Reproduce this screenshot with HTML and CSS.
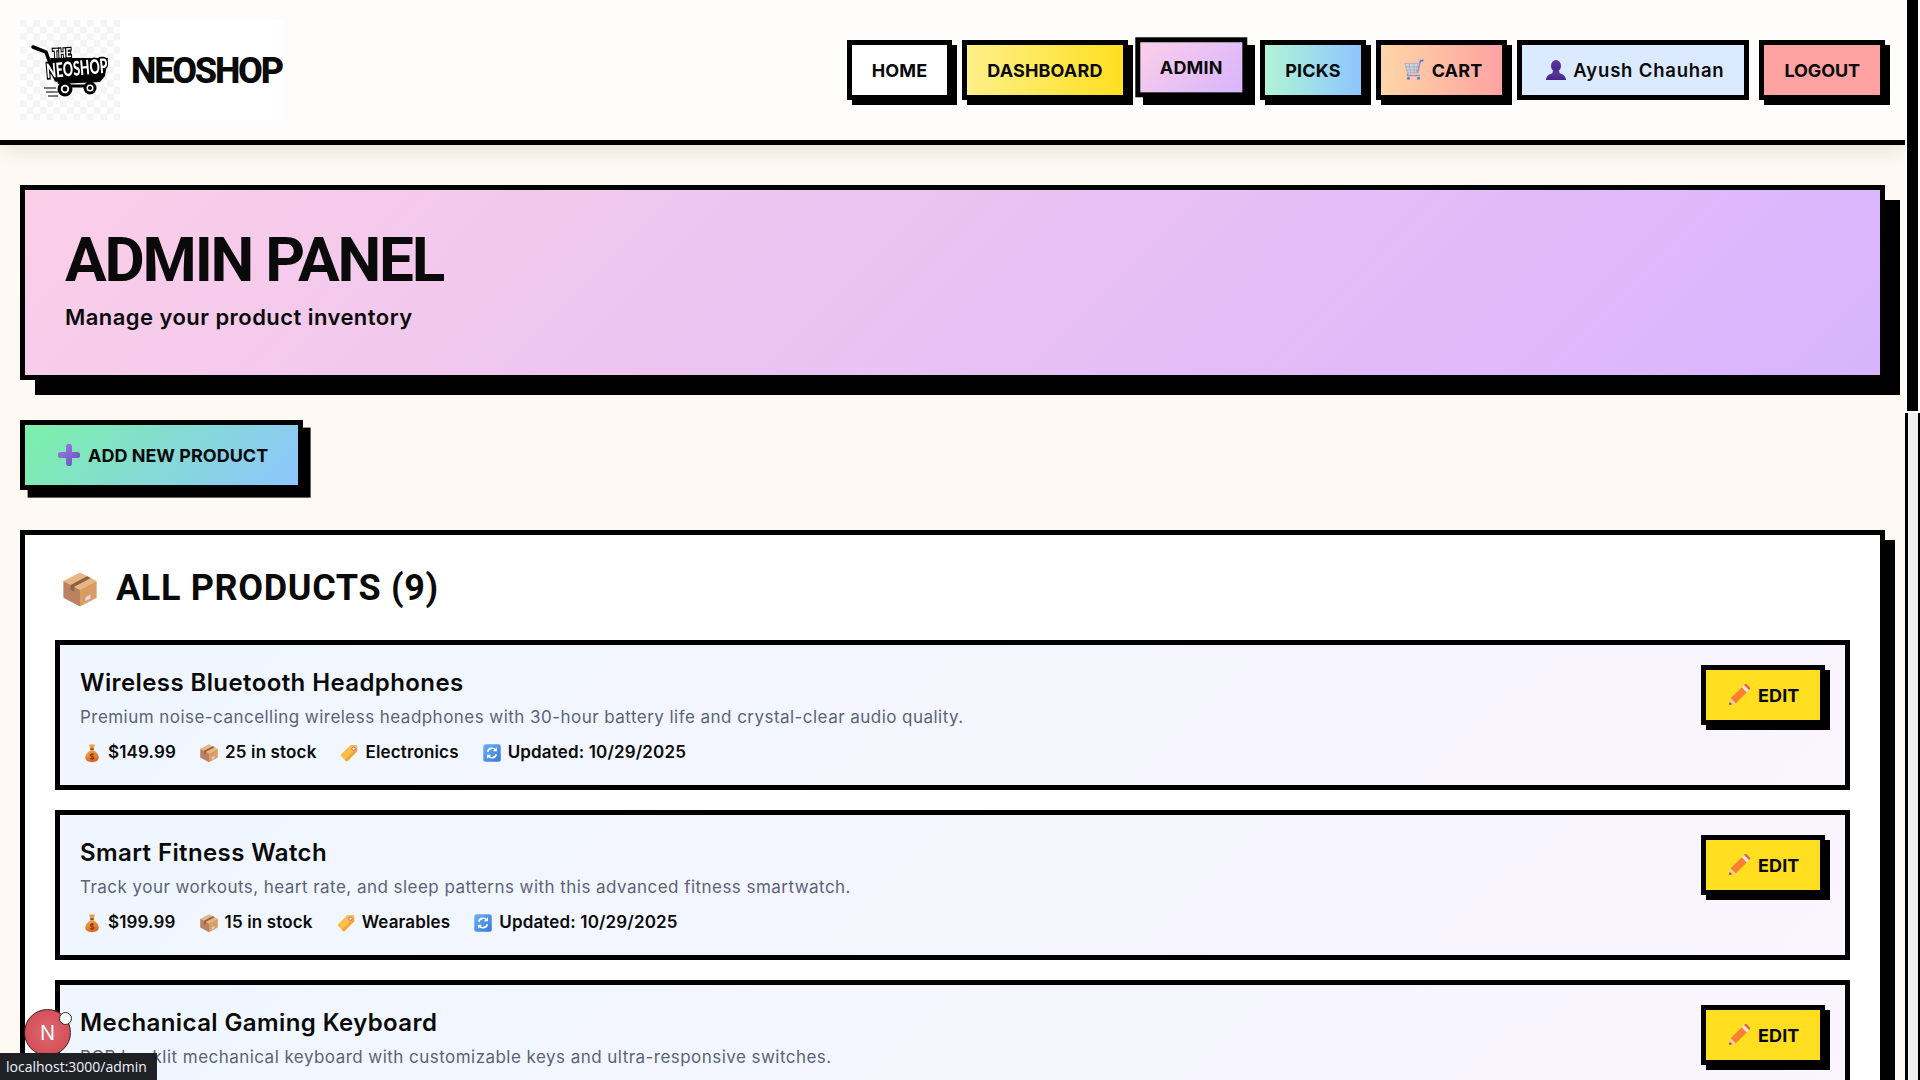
FILE: index.html
```html
<!DOCTYPE html>
<html lang="en">
<head>
<meta charset="utf-8">
<title>NeoShop Admin</title>
<link rel="stylesheet" href="styles.css">
</head>
<body>
<svg class="sprite" aria-hidden="true">
  <defs>
    <linearGradient id="g-bag" x1="0" y1="0" x2="0.3" y2="1"><stop offset="0" stop-color="#f7b046"/><stop offset="1" stop-color="#dd6427"/></linearGradient>
    <linearGradient id="g-blue" x1="0" y1="0" x2="1" y2="1"><stop offset="0" stop-color="#6cb2f5"/><stop offset="1" stop-color="#3577d8"/></linearGradient>
    <linearGradient id="g-plus" x1="0" y1="0" x2="1" y2="1"><stop offset="0" stop-color="#9a74d8"/><stop offset="1" stop-color="#6a58c8"/></linearGradient>
    <linearGradient id="g-purple" x1="0" y1="0" x2="0" y2="1"><stop offset="0" stop-color="#5a3a98"/><stop offset="1" stop-color="#46268a"/></linearGradient>
    <symbol id="i-box" viewBox="0 0 24 24">
      <polygon points="12,1.5 22.5,7 12,12.5 1.5,7" fill="#e6b781"/>
      <polygon points="1.5,7 12,12.5 12,23 1.5,17.5" fill="#bb8262"/>
      <polygon points="22.5,7 12,12.5 12,23 22.5,17.5" fill="#d99c62"/>
      <polygon points="16.6,3.9 18.8,5 8.4,10.6 8.4,13.6 6,12.4 6,9.4" fill="#8d5f4c"/>
      <polygon points="15.4,17.2 18.6,15.5 18.6,18 15.4,19.7" fill="#e2d6ea"/>
    </symbol>
    <symbol id="i-bag" viewBox="0 0 24 24">
      <path d="M12 8C7.5 9 4 14 4 17.5 4 21.5 7.5 23 12 23s8-1.500 8-5.500C20 14 16.500 9 12 8Z" fill="url(#g-bag)"/>
      <path d="M8.500 1.500c1.200.8 2.300.8 3.500 0 1.200.8 2.300.8 3.500 0L14 7h-4Z" fill="#ee9c3c"/>
      <rect x="9.500" y="6.300" width="5" height="2" rx="1" fill="#8c4a2c"/>
      <path d="M14.300 13.800c-.8-1-4.300-1.100-4.300.8 0 2.100 4.200 1 4.200 3.100 0 1.800-3.500 1.800-4.500.7M12 12v8.500" fill="none" stroke="#7c3d26" stroke-width="1.300"/>
    </symbol>
    <symbol id="i-tag" viewBox="0 0 24 24">
      <path d="M14 2.500h7a.8.800 0 0 1 .8.800V10L10.400 21.500a1.500 1.500 0 0 1-2.100 0L2.500 15.700a1.500 1.500 0 0 1 0-2.100Z" fill="#fbbf47"/>
      <path d="M21.800 10 10.400 21.500a1.500 1.500 0 0 1-2.100 0L7 20.200 21.800 5.500Z" fill="#f4a637"/>
      <circle cx="17.500" cy="6.800" r="2.100" fill="#f4ecea" stroke="#d9597a" stroke-width="1.100"/>
    </symbol>
    <symbol id="i-sync" viewBox="0 0 24 24">
      <rect x="1.500" y="1.500" width="21" height="21" rx="3" fill="url(#g-blue)"/>
      <path d="M6.800 10.500A5.500 5.500 0 0 1 16.500 8.500M17.200 13.500A5.500 5.500 0 0 1 7.500 15.500" fill="none" stroke="#fff" stroke-width="2"/>
      <path d="M18 5v5h-5ZM6 19v-5h5Z" fill="#fff"/>
    </symbol>
    <symbol id="i-pencil" viewBox="0 0 24 24">
      <polygon points="1,23 3,15.500 8.500,21" fill="#f3c9a0"/>
      <polygon points="1,23 1.900,19.500 4.500,22" fill="#6a4a5a"/>
      <polygon points="3,15.500 15,3.500 20.500,9 8.500,21" fill="#f98030"/>
      <polygon points="15,3.500 17.500,1 23,6.500 20.500,9" fill="#e8e4ee"/>
      <polygon points="17.500,1 19.500,-.500 24.500,4.500 23,6.500" fill="#f25a45"/>
    </symbol>
    <symbol id="i-plus" viewBox="0 0 24 24">
      <path d="M12 3v18M3 12h18" stroke="url(#g-plus)" stroke-width="6.500" stroke-linecap="round" fill="none"/>
    </symbol>
    <symbol id="i-user" viewBox="0 0 24 24">
      <ellipse cx="12" cy="7.500" rx="5.500" ry="6.500" fill="url(#g-purple)"/>
      <path d="M8.500 13h7l.5 2.500c4 1 6.500 3 7 7.500H1c.5-4.500 3-6.500 7-7.500Z" fill="url(#g-purple)"/>
    </symbol>
    <symbol id="i-cart" viewBox="0 0 24 24">
      <path d="M2 5h16l-2 10H5Z" fill="#d2d3df" stroke="#a9abbd" stroke-width="1"/>
      <path d="M7 5l1 10M12 5v10M16 5l-1.500 10M3 8.500h14.500M4 12h12.800" stroke="#a2a4b8" stroke-width=".8" fill="none"/>
      <path d="M5 15.500v2.500h13.500M16 15l3-12.500h3" stroke="#8b96c4" stroke-width="1.400" fill="none"/>
      <path d="M18.500 4 19.200 1.500h3.300" stroke="#4d86d8" stroke-width="1.600" fill="none"/>
      <circle cx="6" cy="21" r="1.700" fill="#4d86d8"/><circle cx="17" cy="21" r="1.700" fill="#4d86d8"/>
    </symbol>
    <pattern id="checks" width="13.400" height="13.400" patternUnits="userSpaceOnUse">
      <rect width="13.400" height="13.400" fill="#fff"/>
      <rect width="6.700" height="6.700" fill="#f4f4f4"/>
      <rect x="6.700" y="6.700" width="6.700" height="6.700" fill="#f4f4f4"/>
    </pattern>
  </defs>
</svg>

<div class="page">
  <header class="site-header">
    <a class="brand">
      <svg class="brand-logo" viewBox="0 0 100 100" role="img" aria-label="The NeoShop logo">
        <rect width="100" height="100" fill="url(#checks)"/>
        <path d="M13 27 26 32 36 60" fill="none" stroke="#000" stroke-width="3.500" stroke-linecap="round"/>
        <path d="M30 38 88 38 85 56 80 62 38 64Z" fill="#000"/>
        <path d="M24 68H36M26 72H38M28 76H38" stroke="#000" stroke-width="1"/>
        <path d="M45 66H72" stroke="#000" stroke-width="3"/>
        <circle cx="45" cy="69" r="7.500" fill="#000"/><circle cx="45" cy="69" r="4.200" fill="#fff"/><circle cx="45" cy="69" r="2.400" fill="#000"/>
        <circle cx="70" cy="68" r="6.500" fill="#000"/><circle cx="70" cy="68" r="3.500" fill="#fff"/><circle cx="70" cy="68" r="2" fill="#000"/>
        <text class="logo-the" transform="translate(33 38) rotate(-3) scale(1 1.300)">THE</text>
        <text class="logo-name" transform="translate(27 58) rotate(-5) scale(1 1.600)">NEOSHOP</text>
      </svg>
      <span class="brand-name">NEOSHOP</span>
    </a>
    <nav class="nav">
      <a class="nav-btn nav-home">HOME</a>
      <a class="nav-btn nav-dashboard">DASHBOARD</a>
      <a class="nav-btn nav-admin">ADMIN</a>
      <a class="nav-btn nav-picks">PICKS</a>
      <a class="nav-btn nav-cart"><svg class="icon-22"><use href="#i-cart"/></svg>CART</a>
      <span class="nav-btn nav-user"><svg class="icon-22"><use href="#i-user"/></svg>Ayush Chauhan</span>
      <a class="nav-btn nav-logout">LOGOUT</a>
    </nav>
  </header>

  <main class="content">
    <section class="hero">
      <h1 class="hero-title">ADMIN PANEL</h1>
      <p class="hero-sub">Manage your product inventory</p>
    </section>

    <a class="add-btn"><svg class="icon-22"><use href="#i-plus"/></svg>ADD NEW PRODUCT</a>

    <section class="products">
      <h2 class="products-title"><svg class="icon-38"><use href="#i-box"/></svg>ALL PRODUCTS (9)</h2>
      <div class="rows">
        <article class="row">
          <div class="row-info">
            <h3 class="row-title">Wireless Bluetooth Headphones</h3>
            <p class="row-desc">Premium noise-cancelling wireless headphones with 30-hour battery life and crystal-clear audio quality.</p>
            <div class="row-meta">
              <span class="meta-item"><svg class="icon-20"><use href="#i-bag"/></svg>$149.99</span>
              <span class="meta-item"><svg class="icon-20"><use href="#i-box"/></svg>25 in stock</span>
              <span class="meta-item"><svg class="icon-20"><use href="#i-tag"/></svg>Electronics</span>
              <span class="meta-item"><svg class="icon-20"><use href="#i-sync"/></svg>Updated: 10/29/2025</span>
            </div>
          </div>
          <a class="edit-btn"><svg class="icon-22"><use href="#i-pencil"/></svg>EDIT</a>
        </article>
        <article class="row">
          <div class="row-info">
            <h3 class="row-title">Smart Fitness Watch</h3>
            <p class="row-desc">Track your workouts, heart rate, and sleep patterns with this advanced fitness smartwatch.</p>
            <div class="row-meta">
              <span class="meta-item"><svg class="icon-20"><use href="#i-bag"/></svg>$199.99</span>
              <span class="meta-item"><svg class="icon-20"><use href="#i-box"/></svg>15 in stock</span>
              <span class="meta-item"><svg class="icon-20"><use href="#i-tag"/></svg>Wearables</span>
              <span class="meta-item"><svg class="icon-20"><use href="#i-sync"/></svg>Updated: 10/29/2025</span>
            </div>
          </div>
          <a class="edit-btn"><svg class="icon-22"><use href="#i-pencil"/></svg>EDIT</a>
        </article>
        <article class="row">
          <div class="row-info">
            <h3 class="row-title">Mechanical Gaming Keyboard</h3>
            <p class="row-desc">RGB backlit mechanical keyboard with customizable keys and ultra-responsive switches.</p>
          </div>
          <a class="edit-btn"><svg class="icon-22"><use href="#i-pencil"/></svg>EDIT</a>
        </article>
      </div>
    </section>
  </main>
</div>

<aside class="scrollbar"><div class="scroll-thumb"></div><div class="scroll-track"></div></aside>

<div class="dev-badge"><span class="dev-n">N</span><span class="dev-dot"></span></div>
<div class="status-bar">localhost:3000/admin</div>
</body>
</html>
```
FILE: styles.css
```css
* { box-sizing: border-box; }
html, body { margin: 0; height: 100%; }
body {
  display: flex;
  height: 100vh;
  overflow: hidden;
  background: #fff;
  color: #0a0a0a;
  font-family: Inter, "Liberation Sans", sans-serif;
}
.sprite { position: absolute; width: 0; height: 0; }
.page { width: 1905px; flex: none; height: 100vh; overflow: hidden; background: #fff9f3; }
h1, h2, h3, p { margin: 0; }

.icon-22 { width: 22px; height: 22px; flex: none; }
.icon-20 { width: 20px; height: 20px; flex: none; }
.icon-38 { width: 38px; height: 38px; flex: none; margin-left: 6px; }

/* header */
.site-header {
  position: relative;
  z-index: 1;
  display: flex;
  align-items: center;
  justify-content: space-between;
  height: 145px;
  padding: 20px;
  background: #fffdfb;
  border-bottom: 5px solid #000;
  box-shadow: 0 5px 20px rgba(0,0,0,.1);
}
.brand { display: flex; align-items: center; gap: 11px; background: #fff; width: 263px; height: 100px; }
.brand-logo { width: 100px; height: 100px; flex: none; filter: blur(.35px); }
.logo-the { font: 900 9.500px Lato, sans-serif; fill: #fff; stroke: #000; stroke-width: 2px; paint-order: stroke; }
.logo-name { font: 900 12.500px Lato, sans-serif; fill: #fff; stroke: #000; stroke-width: 2.200px; paint-order: stroke; }
.brand-name { padding-top: 2px; font: 800 36px/1 Roboto, sans-serif; letter-spacing: -2.200px; color: #0a0a0a; }

.nav { display: flex; gap: 10px; align-items: center; }
.nav-btn {
  display: flex;
  align-items: center;
  justify-content: center;
  gap: 9px;
  height: 60px;
  padding: 0 20px;
  border: 5px solid #000;
  box-shadow: 5px 5px 0 #000;
  font-size: 18px;
  letter-spacing: .15px;
  font-weight: 700;
  color: #0a0a0a;
  background: #fff;
}
.nav-dashboard { background: linear-gradient(90deg, #fef08a, #ffdf20); }
.nav-admin {
  background: linear-gradient(135deg, #fbcfe8, #d8b4fe);
  transform: translate(-2.700px, -2.700px);
  box-shadow: 7.700px 7.700px 0 #000;
}
.nav-picks { background: linear-gradient(90deg, #b0f5d5, #8ec5ff); }
.nav-cart { padding-left: 22px; gap: 7px; background: linear-gradient(90deg, #ffd6a7, #ffa2a2); }
.nav-user {
  padding-left: 23px;
  gap: 6px;
  background: #dbeafe;
  box-shadow: none;
  font-size: 18.500px;
  letter-spacing: .8px;
  font-weight: 600;
}
.nav-logout { background: #ffa2a2; letter-spacing: -.1px; }

/* content */
.content { display: flex; flex-direction: column; align-items: flex-start; padding: 40px 20px 0; }
.hero {
  width: 100%;
  height: 195px;
  padding: 40px;
  border: 5px solid #000;
  box-shadow: 15px 15px 0 #000;
  background: linear-gradient(135deg, #fbcfe8, #d8b4fe);
}
.hero-title { font: 700 62px/60px Roboto, sans-serif; letter-spacing: -2.200px; }
.hero-sub { margin-top: 10px; font-size: 22px; letter-spacing: .45px; line-height: 35px; font-weight: 600; }

.add-btn {
  display: flex;
  align-items: center;
  gap: 8px;
  height: 70px;
  margin-top: 40px;
  padding: 0 30px 0 33px;
  border: 5px solid #000;
  box-shadow: 7.600px 7.600px 0 #000;
  background: linear-gradient(135deg, #7bf1a8, #8ec5ff);
  font-size: 18px;
  font-weight: 700;
}

.products {
  width: 100%;
  margin-top: 40px;
  padding: 30px;
  border: 5px solid #000;
  box-shadow: 10px 10px 0 #000;
  background: #fff;
}
.products-title {
  display: flex;
  align-items: center;
  gap: 17px;
  height: 47px;
  margin-bottom: 28px;
  font: 700 36px/45px Roboto, sans-serif;
  letter-spacing: .65px;
}
.rows { display: flex; flex-direction: column; gap: 20px; }
.row {
  display: flex;
  align-items: flex-start;
  justify-content: space-between;
  height: 150px;
  padding: 20px;
  border: 5px solid #000;
  background: linear-gradient(135deg, #eff6ff, #faf5ff);
}
.row-title { font-size: 24px; line-height: 35px; font-weight: 600; letter-spacing: .4px; }
.row-desc { margin-top: 5px; font-size: 17px; letter-spacing: .46px; line-height: 24px; color: #5a6476; }
.row-meta { display: flex; gap: 23px; margin: 11px 0 0 2px; }
.meta-item { display: flex; align-items: center; gap: 6px; font-size: 17px; letter-spacing: .15px; line-height: 25px; font-weight: 600; }

.edit-btn {
  display: flex;
  align-items: center;
  gap: 8px;
  height: 60px;
  width: 124px;
  padding-left: 22px;
  border: 5px solid #000;
  box-shadow: 5px 5px 0 #000;
  background: #ffdf20;
  font-size: 18px;
  letter-spacing: .1px;
  font-weight: 700;
}

/* scrollbar */
.scrollbar { width: 15px; flex: none; display: flex; flex-direction: column; background: #fff; }
.scroll-thumb { height: 411px; margin: 0 2px 2px; background: #000; }
.scroll-track { flex: 1; background: #f0f0f0; border-left: 3px solid #000; border-right: 2px solid #000; }

/* overlays */
.dev-badge {
  position: fixed;
  left: 24px;
  top: 1009px;
  z-index: 2;
  display: flex;
  align-items: center;
  justify-content: center;
  width: 47px;
  height: 47px;
  border-radius: 50%;
  border: 1.500px solid #2b2b2b;
  background: radial-gradient(circle, #d95f68 30%, #d6414c 100%);
  color: #fff;
}
.dev-n { font-size: 20px; font-weight: 400; font-family: Inter, sans-serif; }
.dev-dot {
  position: absolute;
  right: -2px;
  top: 2px;
  width: 13px;
  height: 13px;
  border-radius: 50%;
  background: #fff;
  border: 1.500px solid #2b2b2b;
}
.status-bar {
  position: fixed;
  left: 0;
  bottom: 0;
  z-index: 3;
  width: 157px;
  height: 27px;
  padding-left: 6px;
  background: #202124;
  color: #eef3ff;
  font: 400 14px/27px "Open Sans", sans-serif;
  white-space: nowrap;
}
```
